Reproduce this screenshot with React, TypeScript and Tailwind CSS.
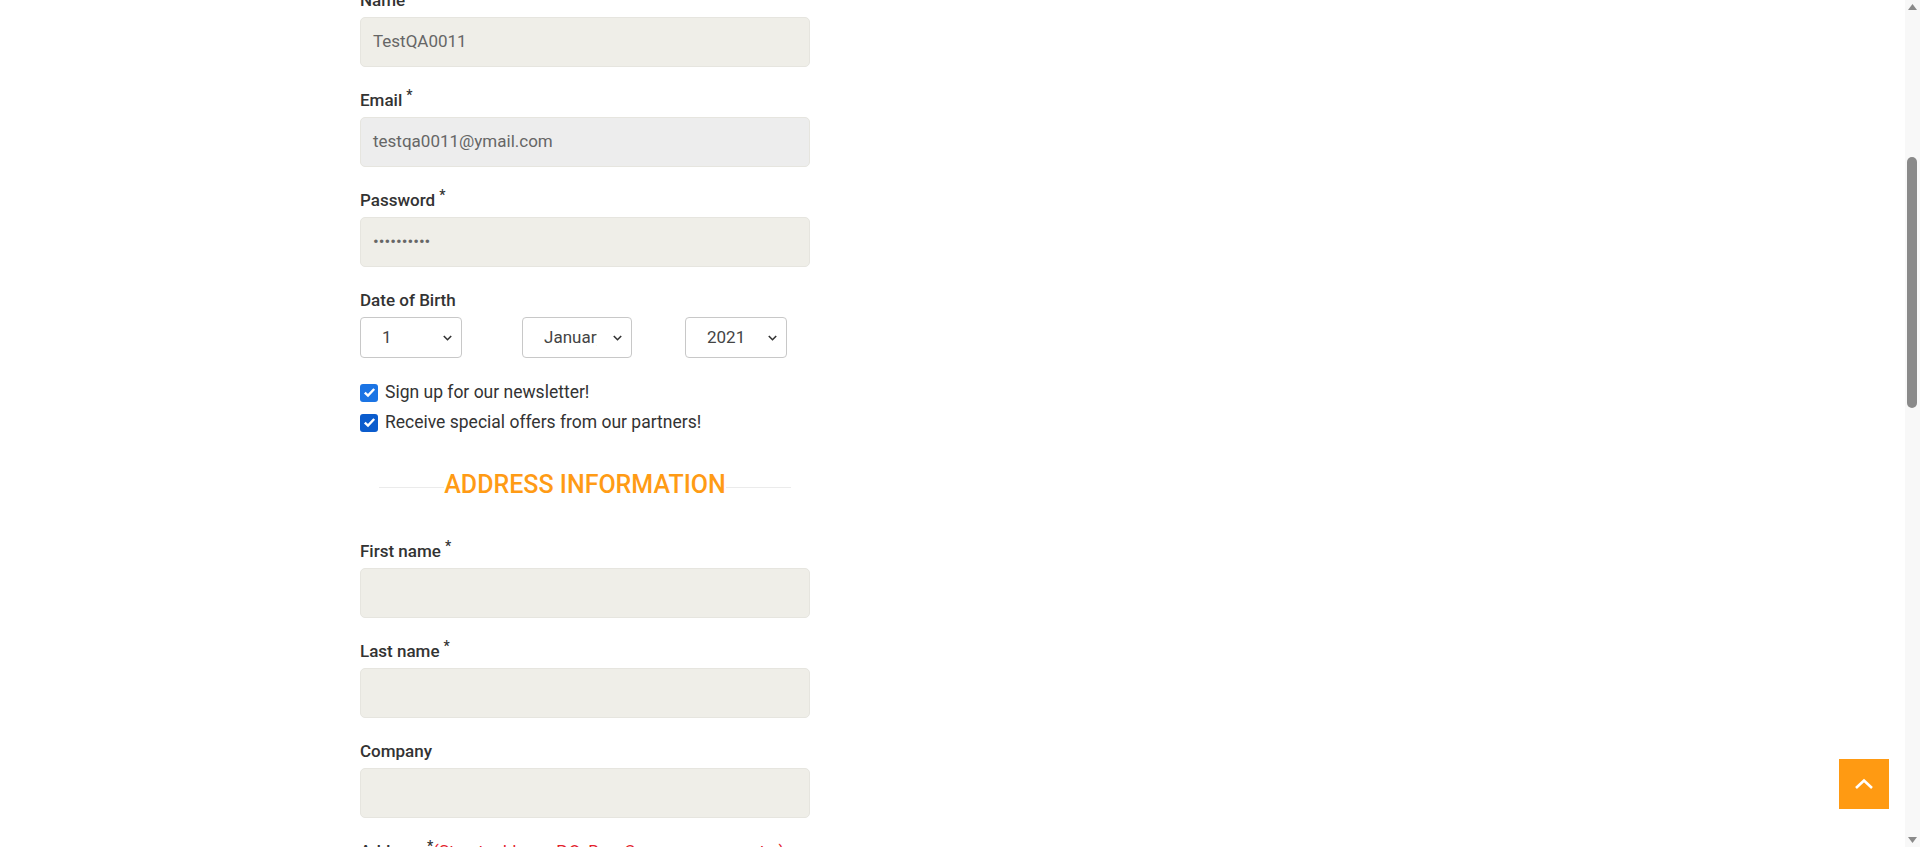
import React from "react";

function Req() {
  return <span className="relative -top-[6px] ml-[4px] text-[14px] leading-none">*</span>;
}

function Field({
  label,
  required,
  value,
  gray,
  first,
}: {
  label: string;
  required?: boolean;
  value?: string;
  gray?: boolean;
  first?: boolean;
}) {
  return (
    <div className={first ? "mt-[-11px]" : "mt-[22px]"}>
      <div className="h-[22px] leading-[22px] text-[17px] font-medium text-[#333]">
        {label}
        {required && <Req />}
      </div>
      <div
        className={`mt-[6px] h-[50px] rounded-[5px] border border-[#e6e5df] px-[12px] flex items-center text-[17px] text-[#666] ${
          gray ? "bg-[#ededed]" : "bg-[#efeee8]"
        }`}
      >
        {value}
      </div>
    </div>
  );
}

function Chevron() {
  return (
    <svg width="9" height="6" viewBox="0 0 9 6" className="shrink-0">
      <path d="M0.8 1 L4.5 4.7 L8.2 1" fill="none" stroke="#333" strokeWidth="1.6" />
    </svg>
  );
}

function Select({ value, w }: { value: string; w: string }) {
  return (
    <div
      className={`${w} h-[41px] rounded-[4px] border border-[#c8c8c8] bg-white flex items-center pl-[21px] text-[17px] text-[#444]`}
    >
      <span className="flex-1 overflow-hidden whitespace-nowrap">{value}</span>
      <div className="w-[34px] flex justify-end pr-[9px]">
        <Chevron />
      </div>
    </div>
  );
}

function Check({ color }: { color: string }) {
  return (
    <div className={`w-[18px] h-[18px] rounded-[3px] ${color} flex items-center justify-center shrink-0`}>
      <svg width="13" height="11" viewBox="0 0 13 11">
        <path d="M1.8 5.6 L5 8.6 L11.2 2" fill="none" stroke="white" strokeWidth="2.4" />
      </svg>
    </div>
  );
}

export default function App() {
  return (
    <div className="h-[847px] w-[1920px] overflow-hidden flex bg-white font-[Roboto,sans-serif]">
      <div className="flex-1 relative overflow-hidden">
        <div className="ml-[360px] w-[450px]">
          <Field first label="Name" value="TestQA0011" />
          <Field label="Email" required value="testqa0011@ymail.com" gray />
          <Field label="Password" required value="••••••••••" />

          <div className="mt-[22px]">
            <div className="h-[22px] leading-[22px] text-[17px] font-medium text-[#333]">Date of Birth</div>
            <div className="mt-[6px] flex">
              <Select value="1" w="w-[102px]" />
              <div className="ml-[60px]">
                <Select value="January" w="w-[110px]" />
              </div>
              <div className="ml-[53px]">
                <Select value="2021" w="w-[102px]" />
              </div>
            </div>
          </div>

          <div className="mt-[22px] flex flex-col gap-[5px]">
            <div className="h-[25px] flex items-center gap-[7px] text-[17.5px] text-[#333]">
              <Check color="bg-[#1b74e4]" />
              <span>Sign up for our newsletter!</span>
            </div>
            <div className="h-[25px] flex items-center gap-[7px] text-[17.5px] text-[#333]">
              <Check color="bg-[#0b5ccd]" />
              <span>Receive special offers from our partners!</span>
            </div>
          </div>

          <div className="mt-[35px] mx-[19px] h-[30px] flex items-center">
            <div className="flex-1 h-[1px] bg-[#ebebeb] mt-[4px]" />
            <div className="text-[25px] leading-[30px] font-medium text-[#ff9b15]">ADDRESS INFORMATION</div>
            <div className="flex-1 h-[1px] bg-[#ebebeb] mt-[4px]" />
          </div>

          <div className="pt-[18px]">
            <Field label="First name" required />
            <Field label="Last name" required />
            <Field label="Company" />
            <div className="mt-[22px] h-[22px] leading-[22px] text-[17px] font-medium text-[#333] whitespace-nowrap">
              Address
              <Req />
              <span className="font-normal text-[17px] text-[#e4212c]">(Street address, P.O. Box, Company name, etc.)</span>
            </div>
          </div>
        </div>

        <button className="absolute left-[1839px] top-[759px] w-[50px] h-[50px] bg-[#ff9a12] flex items-center justify-center">
          <svg width="20" height="12" viewBox="0 0 20 12">
            <path d="M2 10 L10 2.5 L18 10" fill="none" stroke="white" strokeWidth="2.6" />
          </svg>
        </button>
      </div>

      <div className="w-[15px] h-full bg-[#f8f8f8] relative flex flex-col items-center">
        <svg width="9" height="6" viewBox="0 0 9 6" className="mt-[4px]">
          <path d="M0 6 L4.5 0 L9 6 Z" fill="#8a8a8a" />
        </svg>
        <div className="absolute left-[2px] top-[157px] w-[10px] h-[251px] rounded-full bg-[#8a8a8a]" />
        <div className="flex-1" />
        <svg width="9" height="6" viewBox="0 0 9 6" className="mb-[4px]">
          <path d="M0 0 L9 0 L4.5 6 Z" fill="#8a8a8a" />
        </svg>
      </div>
    </div>
  );
}
